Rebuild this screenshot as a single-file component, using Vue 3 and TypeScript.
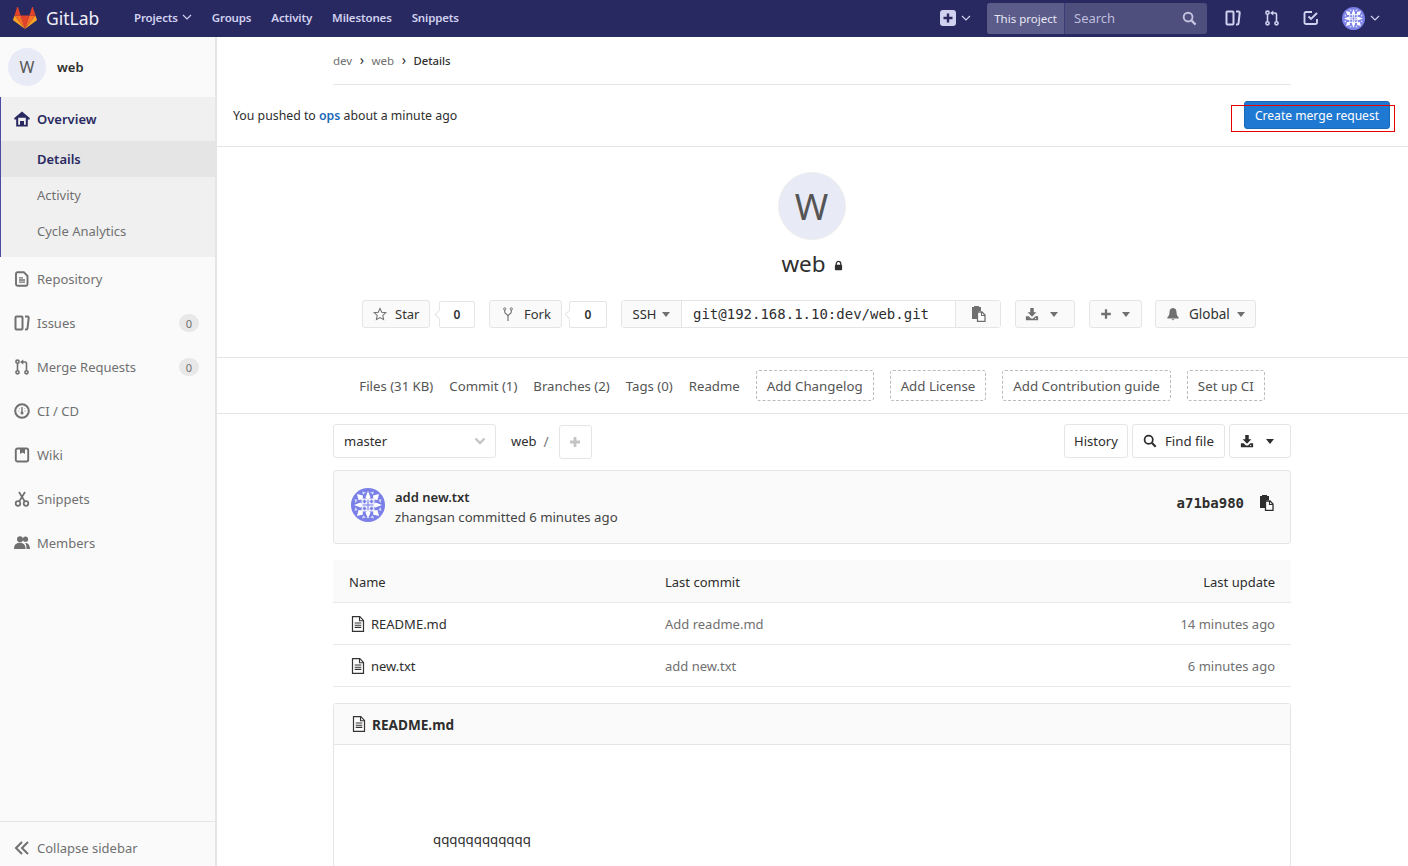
<script setup lang="ts">
const topLinks = ['Groups', 'Activity', 'Milestones', 'Snippets']
const statLinks = ['Files (31 KB)', 'Commit (1)', 'Branches (2)', 'Tags (0)', 'Readme']
const addLinks = ['Add Changelog', 'Add License', 'Add Contribution guide', 'Set up CI']
const rows = [
  { name: 'README.md', msg: 'Add readme.md', time: '14 minutes ago' },
  { name: 'new.txt', msg: 'add new.txt', time: '6 minutes ago' },
]
</script>

<template>
  <div class="page">
    <svg class="defs" width="0" height="0">
      <defs>
        <symbol id="identicon" viewBox="0 0 34 34">
          <circle cx="17" cy="17" r="17" fill="#7a80e8" />
          <g fill="#fff">
            <path d="M10.500 10.500h6v6h-6zM17.500 10.500h6v6h-6zM10.500 17.500h6v6h-6zM17.500 17.500h6v6h-6z" opacity=".85" />
            <path d="M17 3l2.500 6.500L17 12l-2.500-2.500zM17 31l2.500-6.500L17 22l-2.500 2.500zM3 17l6.500-2.500L12 17l-2.500 2.500zM31 17l-6.500-2.500L22 17l2.500 2.500z" />
            <path d="M6 6l6 1.500-.5 4-4 .5zM28 6l-6 1.500.5 4 4 .5zM6 28l6-1.500-.5-4-4-.5zM28 28l-6-1.500.5-4 4-.5z" />
            <path d="M3.500 11l3 1-2 3zM30.500 11l-3 1 2 3zM3.500 23l3-1-2-3zM30.500 23l-3-1 2-3zM11 3.500l1 3 3-2zM23 3.500l-1 3-3-2zM11 30.500l1-3 3 2zM23 30.500l-1-3-3 2z" opacity=".7" />
          </g>
          <path d="M13.500 11.500l2 2-2 2-2-2zM20.500 11.500l2 2-2 2-2-2zM13.500 18.500l2 2-2 2-2-2zM20.500 18.500l2 2-2 2-2-2z" fill="#7a80e8" />
        </symbol>
        <symbol id="doc" viewBox="0 0 14 16">
          <path d="M1.500.7h7.300l3.700 3.700v10.900h-11z" fill="#fff" stroke="#333" stroke-width="1.200" />
          <path d="M8.500.7v4h4M3.700 7h6.600M3.700 9.200h6.600M3.700 11.400h6.600" fill="none" stroke="#333" stroke-width="1.100" />
        </symbol>
        <symbol id="issues" viewBox="0 0 16 16">
          <path d="M2.500 1.500h5a1 1 0 0 1 1 1v11a1 1 0 0 1-1 1h-5a1 1 0 0 1-1-1v-11a1 1 0 0 1 1-1z" fill="none" stroke="currentColor" stroke-width="2" />
          <path d="M11 1.500h2.500a1.200 1.200 0 0 1 1.200 1.300l-1.200 10.500a1.300 1.300 0 0 1-1.300 1.200H11" fill="none" stroke="currentColor" stroke-width="2" />
        </symbol>
        <symbol id="merge" viewBox="0 0 16 16">
          <g fill="none" stroke="currentColor" stroke-width="1.600">
            <circle cx="3.500" cy="2.700" r="1.600" />
            <circle cx="3.500" cy="13.300" r="1.600" />
            <circle cx="12.500" cy="13.300" r="1.600" />
            <path d="M3.500 4.500v7M12.500 11.500V4.500a1.500 1.500 0 0 0-1.500-1.500H8.500" />
          </g>
          <path d="M9.300.4v5.200L6 3z" fill="currentColor" />
        </symbol>
        <symbol id="download" viewBox="0 0 16 16">
          <path d="M6 1h4v5h3l-5 5-5-5h3z" fill="currentColor" />
          <path d="M1 10.500h3.200L6.800 13h2.400l2.600-2.500H15V15H1z" fill="currentColor" />
          <path d="M11.500 12.700h1.300v1h-1.300z" fill="#fff" />
        </symbol>
        <symbol id="clip" viewBox="0 0 16 16">
          <path d="M2 1h2V0h5v1h2v4H8.500v8H2z" fill="currentColor" />
          <path d="M9.300 6H12l3 3v6.500H7.500V6z" fill="#fff" stroke="currentColor" stroke-width="1.300" />
          <path d="M11.500 6v3.500H15" fill="none" stroke="currentColor" stroke-width="1.100" />
        </symbol>
      </defs>
    </svg>

    <header class="topbar">
      <div class="brand">
        <svg class="tanuki" viewBox="0 0 210 194">
          <path d="M105.060 193.660l38.640-118.920H66.420z" fill="#e24329" />
          <path d="M105.060 193.660L66.420 74.730H12.270z" fill="#fc6d26" />
          <path d="M12.270 74.730L.53 110.870c-1.070 3.300.1 6.910 2.900 8.950l101.630 73.840z" fill="#fca326" />
          <path d="M12.270 74.730h54.150L43.150 3.110c-1.200-3.690-6.410-3.690-7.610 0z" fill="#e24329" />
          <path d="M105.060 193.660l38.640-118.930h54.150z" fill="#fc6d26" />
          <path d="M197.850 74.730l11.750 36.140c1.070 3.300-.1 6.910-2.910 8.950l-101.630 73.840z" fill="#fca326" />
          <path d="M197.850 74.730H143.700l23.270-71.620c1.200-3.690 6.410-3.690 7.610 0z" fill="#e24329" />
        </svg>
        <span class="brand-name">GitLab</span>
      </div>
      <nav class="toplinks">
        <span class="toplink">Projects
          <svg class="chev" viewBox="0 0 10 6"><path d="M1 1l4 4 4-4" /></svg>
        </span>
        <span v-for="l in topLinks" :key="l" class="toplink">{{ l }}</span>
      </nav>
      <div class="top-right">
        <span class="plus-box">
          <svg viewBox="0 0 16 16" width="16" height="16"><rect width="16" height="16" rx="3" fill="#d1d1f0" /><path d="M8 3.500v9M3.500 8h9" stroke="#292961" stroke-width="2.400" /></svg>
          <svg class="chev" viewBox="0 0 10 6"><path d="M1 1l4 4 4-4" /></svg>
        </span>
        <div class="search">
          <span class="scope">This project</span>
          <span class="search-text">Search</span>
          <svg class="search-icon" viewBox="0 0 16 16"><circle cx="6.500" cy="6.500" r="4.700" fill="none" stroke="#c4c4e0" stroke-width="2" /><path d="M10 10l4.500 4.500" stroke="#c4c4e0" stroke-width="2.400" /></svg>
        </div>
        <svg class="top-ico issues-ico" viewBox="0 0 16 16"><use href="#issues" /></svg>
        <svg class="top-ico merge-ico" viewBox="0 0 16 16"><use href="#merge" /></svg>
        <svg class="top-ico todo-ico" viewBox="0 0 16 16"><path d="M9 2H3a1.500 1.500 0 0 0-1.500 1.500v9A1.500 1.500 0 0 0 3 14h9.500a1.500 1.500 0 0 0 1.500-1.500V9" fill="none" stroke="currentColor" stroke-width="1.900" /><path d="M5.500 6.500L8 9l6-6" fill="none" stroke="currentColor" stroke-width="1.900" /></svg>
        <span class="user">
          <svg width="23" height="23"><use href="#identicon" width="23" height="23" /></svg>
          <svg class="chev" viewBox="0 0 10 6"><path d="M1 1l4 4 4-4" /></svg>
        </span>
      </div>
    </header>

    <div class="body">
      <aside class="sidebar">
        <div class="side-head">
          <span class="side-avatar">W</span>
          <span class="side-name">web</span>
        </div>
        <div class="side-group">
          <div class="side-item active">
            <svg class="side-ico" viewBox="0 0 16 16"><path d="M8 .5L.3 7v1.500h1.900V15.500h11.600V8.500h1.900V7zM4.200 6.800h7.600v6.900H10V10H6v3.700H4.200z" fill="currentColor" fill-rule="evenodd" /></svg>
            Overview
          </div>
          <div class="sub current">Details</div>
          <div class="sub">Activity</div>
          <div class="sub">Cycle Analytics</div>
        </div>
        <div class="side-item">
          <svg class="side-ico" viewBox="0 0 16 16"><path d="M3.500 1.200h6.300l3.700 3.800v8.300a1.500 1.500 0 0 1-1.500 1.500H3.500A1.500 1.500 0 0 1 2 13.300V2.700a1.500 1.500 0 0 1 1.500-1.500z" fill="none" stroke="currentColor" stroke-width="1.900" /><path d="M5 6.800h4M5 9h6M5 11.200h6" stroke="currentColor" stroke-width="1.300" /></svg>
          Repository
        </div>
        <div class="side-item">
          <svg class="side-ico" viewBox="0 0 16 16"><use href="#issues" /></svg>
          Issues<span class="count">0</span>
        </div>
        <div class="side-item">
          <svg class="side-ico" viewBox="0 0 16 16"><use href="#merge" /></svg>
          Merge Requests<span class="count">0</span>
        </div>
        <div class="side-item">
          <svg class="side-ico" viewBox="0 0 16 16"><circle cx="8" cy="8" r="6.800" fill="none" stroke="currentColor" stroke-width="2" /><path d="M8 4v5" stroke="currentColor" stroke-width="1.400" /><circle cx="8" cy="10" r="1.500" fill="currentColor" /><path d="M4.500 8h.8M10.700 8h.8M5 5.200l.5.500M11 5.200l-.5.500" stroke="currentColor" stroke-width="1" /></svg>
          CI / CD
        </div>
        <div class="side-item">
          <svg class="side-ico" viewBox="0 0 16 16"><rect x="1.800" y="1.500" width="12.400" height="13" rx="1.800" fill="none" stroke="currentColor" stroke-width="1.900" /><path d="M6 1.500h5V7L8.500 5.500 6 7z" fill="currentColor" /></svg>
          Wiki
        </div>
        <div class="side-item">
          <svg class="side-ico" viewBox="0 0 16 16"><circle cx="4" cy="12.500" r="2.300" fill="none" stroke="currentColor" stroke-width="1.700" /><circle cx="12" cy="12.500" r="2.300" fill="none" stroke="currentColor" stroke-width="1.700" /><path d="M5.200 10.500L11 1M10.800 10.500L5 1" stroke="currentColor" stroke-width="1.700" /></svg>
          Snippets
        </div>
        <div class="side-item">
          <svg class="side-ico" viewBox="0 0 16 16"><circle cx="6" cy="4.200" r="3" fill="currentColor" /><circle cx="11.500" cy="4.200" r="2.600" fill="currentColor" /><path d="M0 14c0-4 2-6.200 5.800-6.200S11.500 10 11.500 14z" fill="currentColor" /><path d="M12.500 14H16c0-3.300-1.500-6-4.800-6 1 1.500 1.300 3.500 1.300 6z" fill="currentColor" /></svg>
          Members
        </div>
        <div class="collapse">
          <svg class="side-ico" viewBox="0 0 16 16"><path d="M8 2L2 8l6 6M14 2L8 8l6 6" fill="none" stroke="currentColor" stroke-width="2" /></svg>
          Collapse sidebar
        </div>
      </aside>

      <main class="main">
        <div class="crumbs">
          <span class="crumb">dev</span><span class="sep">›</span>
          <span class="crumb">web</span><span class="sep">›</span>
          <span class="crumb-last">Details</span>
        </div>

        <div class="pushed">
          <span>You pushed to <b class="ops">ops</b> about a minute ago</span>
          <button class="btn-create">Create merge request</button>
          <span class="red-mark"></span>
        </div>

        <section class="project">
          <div class="big-avatar">W</div>
          <div class="title">web
            <svg class="lock" viewBox="0 0 10 11"><path d="M2.500 5V3.500a2.500 2.500 0 0 1 5 0V5" fill="none" stroke="#2e2e2e" stroke-width="1.400" /><rect x="1" y="4.800" width="8" height="6" rx="1" fill="#2e2e2e" /></svg>
          </div>
          <div class="actions">
            <span class="btn star"><svg class="ico14" viewBox="0 0 16 16"><path d="M8 1.600l2 4.300 4.700.6-3.500 3.200.9 4.700L8 12.100l-4.100 2.300.9-4.700L1.300 6.500 6 5.900z" fill="none" stroke="#707070" stroke-width="1.200" /></svg>Star</span>
            <span class="bubble b1">0</span>
            <span class="btn fork"><svg class="fork-ico" viewBox="0 0 10 16"><circle cx="1.500" cy="2" r="1.200" fill="none" stroke="#707070" /><circle cx="8.500" cy="2" r="1.200" fill="none" stroke="#707070" /><path d="M1.500 3.200v2c0 2 3.500 2.500 3.500 4.800v5M8.500 3.200v2c0 2-3.500 2.500-3.500 4.800" fill="none" stroke="#707070" stroke-width="1.200" /></svg>Fork</span>
            <span class="bubble b2">0</span>
            <div class="clone">
              <span class="ssh">SSH<i class="caret"></i></span>
              <span class="url">git@192.168.1.10:dev/web.git</span>
              <span class="copy"><svg class="ico16 grey" viewBox="0 0 16 16"><use href="#clip" /></svg></span>
            </div>
            <span class="btn dl"><svg class="ico14 grey" viewBox="0 0 16 16"><use href="#download" /></svg><i class="caret"></i></span>
            <span class="btn add"><svg class="ico14" viewBox="0 0 16 16"><path d="M8 2.500v11M2.500 8h11" stroke="#707070" stroke-width="2.600" /></svg><i class="caret"></i></span>
            <span class="btn global"><svg class="ico14" viewBox="0 0 16 16"><path d="M8 1c-3 0-4 2.500-4 5 0 3-1 4.500-2.500 6v1h13v-1C13 10.500 12 9 12 6c0-2.500-1-5-4-5zM6.300 14a1.800 1.800 0 0 0 3.400 0z" fill="#707070" /></svg>Global<i class="caret"></i></span>
          </div>
        </section>

        <div class="stats">
          <span v-for="s in statLinks" :key="s" class="stat">{{ s }}</span>
          <span v-for="a in addLinks" :key="a" class="dashed">{{ a }}</span>
        </div>

        <div class="content">
          <div class="tree-bar">
            <div class="branch">master
              <svg class="branch-chev" viewBox="0 0 12 8"><path d="M1.500 1.500L6 6l4.500-4.500" fill="none" stroke="#c4c4c4" stroke-width="2.400" /></svg>
            </div>
            <span class="path">web</span><span class="slash">/</span>
            <span class="plus"><svg viewBox="0 0 12 12" width="12" height="12"><path d="M6 1v10M1 6h10" stroke="#c4c4c4" stroke-width="2.800" /></svg></span>
            <div class="tree-right">
              <span class="tbtn history">History</span>
              <span class="tbtn find"><svg viewBox="0 0 16 16" width="14" height="14"><circle cx="6.500" cy="6.500" r="4.700" fill="none" stroke="#2e2e2e" stroke-width="2" /><path d="M10 10l4.500 4.500" stroke="#2e2e2e" stroke-width="2.400" /></svg>Find file</span>
              <span class="tbtn dl2"><svg class="ico14 dark" viewBox="0 0 16 16"><use href="#download" /></svg><i class="caret dark-caret"></i></span>
            </div>
          </div>

          <div class="commit">
            <svg class="commit-avatar" width="34" height="34"><use href="#identicon" width="34" height="34" /></svg>
            <div class="commit-text">
              <div class="commit-title">add new.txt</div>
              <div class="commit-meta">zhangsan committed 6 minutes ago</div>
            </div>
            <span class="sha">a71ba980</span>
            <svg class="ico16 dark sha-copy" viewBox="0 0 16 16"><use href="#clip" /></svg>
          </div>

          <div class="table">
            <div class="tr th">
              <span class="c1">Name</span><span class="c2">Last commit</span><span class="c3">Last update</span>
            </div>
            <div v-for="r in rows" :key="r.name" class="tr">
              <span class="c1 fname"><svg width="14" height="16"><use href="#doc" width="14" height="16" /></svg>{{ r.name }}</span>
              <span class="c2 muted">{{ r.msg }}</span>
              <span class="c3 muted">{{ r.time }}</span>
            </div>
          </div>

          <div class="readme">
            <div class="readme-head"><svg width="14" height="16"><use href="#doc" width="14" height="16" /></svg>README.md</div>
            <div class="readme-body">qqqqqqqqqqqq</div>
          </div>
        </div>
      </main>
    </div>
  </div>
</template>

<style>
html, body { margin: 0; height: 100%; overflow: hidden; background: #fff; }
</style>

<style scoped>
.page { height: 866px; overflow: hidden; display: flex; flex-direction: column; font-family: "Noto Sans", "Open Sans", sans-serif; font-size: 14px; color: #2e2e2e; }
.defs { position: absolute; }
.topbar { height: 37px; flex: none; background: #292961; display: flex; align-items: center; color: #d1d1f0; padding-bottom: 1px; box-sizing: border-box; }
.brand { display: flex; align-items: center; margin-left: 13px; width: 121px; flex: none; }
.tanuki { width: 24px; height: 22px; }
.brand-name { margin-left: 9px; font-size: 17.500px; color: #f0f0f8; }
.toplinks { display: flex; gap: 20px; font-size: 11.500px; font-weight: 600; letter-spacing: -0.15px; padding-bottom: 2px; }
.toplink { display: flex; align-items: center; gap: 4px; }
.chev { width: 10px; height: 6px; fill: none; stroke: #d1d1f0; stroke-width: 1.200; }
.top-right { margin-left: auto; display: flex; align-items: center; }
.plus-box { display: flex; align-items: center; gap: 5px; margin-right: 16px; }
.search { width: 220px; height: 31px; background: #4f4f7e; border-radius: 3px; display: flex; align-items: center; overflow: hidden; }
.scope { width: 77px; height: 100%; background: #5c5c8a; border-right: 1px solid #3b3b78; display: flex; align-items: center; justify-content: center; font-size: 11.500px; color: #e8e8f5; flex: none; }
.search-text { margin-left: 9px; font-size: 13px; color: #bdbddb; }
.search-icon { width: 15px; height: 15px; margin-left: auto; margin-right: 10px; }
.top-ico { width: 16px; height: 16px; color: #d1d1f0; }
.issues-ico { margin-left: 18px; }
.merge-ico { margin-left: 23px; }
.todo-ico { margin-left: 23px; }
.user { display: flex; align-items: center; gap: 5px; margin-left: 23px; margin-right: 28px; }

.body { flex: 1; display: flex; min-height: 0; }
.sidebar { width: 217px; flex: none; box-sizing: border-box; background: #fafafa; border-right: 2px solid #e5e5e5; display: flex; flex-direction: column; color: #707070; font-size: 13px; }
.side-head { height: 60px; display: flex; align-items: center; flex: none; }
.side-avatar { width: 38px; height: 38px; margin-left: 8px; border-radius: 50%; background: #e8eaf6; color: #555; display: flex; align-items: center; justify-content: center; font-size: 16px; }
.side-name { margin-left: 11px; color: #2e2e2e; font-weight: 600; font-size: 13px; }
.side-group { background: #f0f0f0; border-left: 1px solid #4b4ba3; padding-bottom: 8px; }
.side-item { height: 44px; flex: none; display: flex; align-items: center; padding-left: 14px; padding-right: 16px; }
.side-group .side-item { padding-left: 13px; }
.side-item.active { color: #292961; font-weight: 600; }
.side-ico { width: 16px; height: 16px; margin-right: 7px; flex: none; }
.sub { height: 36px; display: flex; align-items: center; padding-left: 36px; }
.sub.current { background: #e5e5e5; color: #292961; font-weight: 600; }
.count { margin-left: auto; width: 20px; height: 18px; border-radius: 9px; background: #e8e8e8; font-size: 11px; display: flex; align-items: center; justify-content: center; }
.collapse { margin-top: auto; height: 45px; flex: none; border-top: 1px solid #e5e5e5; display: flex; align-items: center; padding-left: 14px; padding-top: 7px; box-sizing: border-box; }

.main { flex: 1; min-width: 0; display: flex; flex-direction: column; }
.crumbs { margin: 0 116px; width: 958px; height: 47px; flex: none; border-bottom: 1px solid #e5e5e5; display: flex; align-items: center; font-size: 11.500px; color: #707070; }
.sep { margin: 0 7.500px; color: #2e2e2e; font-size: 14px; line-height: 14px; position: relative; top: -1px; }
.crumb-last { color: #2e2e2e; font-weight: 500; font-size: 11.300px; }
.pushed { height: 61px; flex: none; display: flex; align-items: center; justify-content: space-between; padding: 0 18px 0 16px; border-bottom: 1px solid #e5e5e5; position: relative; font-size: 12.300px; }
.ops { color: #1b69b6; font-weight: 600; }
.btn-create { height: 28px; width: 146px; margin-top: -1px; background: #1f78d1; border: 1px solid #1b69b6; border-radius: 3px; color: #fff; font: inherit; font-size: 12.100px; padding: 0; }
.red-mark { position: absolute; left: 1014px; top: 20px; width: 162px; height: 25px; border: 1px solid #e60000; pointer-events: none; }
.project { height: 210px; flex: none; border-bottom: 1px solid #e5e5e5; display: flex; flex-direction: column; align-items: center; }
.big-avatar { width: 68px; height: 68px; box-sizing: border-box; margin-top: 25px; margin-left: -2px; border-radius: 50%; background: #e8eaf6; border: 1px solid #eee; font-size: 36px; color: #555; display: flex; align-items: center; justify-content: center; }
.title { font-size: 22.500px; line-height: 30px; margin-top: 9px; color: #2e2e2e; display: flex; align-items: center; margin-left: -1px; }
.lock { width: 9px; height: 11px; margin-left: 8px; margin-top: 2px; }
.actions { display: flex; align-items: center; margin-top: 21px; height: 28px; margin-left: -7px; }
.btn { height: 28px; box-sizing: border-box; border: 1px solid #e5e5e5; border-radius: 3px; background: #fafafa; display: flex; align-items: center; color: #333; font-size: 13px; padding: 0 10px; flex: none; }
.star { width: 68px; }
.fork { width: 73px; padding-left: 13px; }
.fork-ico { width: 10px; height: 15px; margin-right: 11px; flex: none; }
.ico14 { width: 14px; height: 14px; margin-right: 8px; flex: none; }
.ico16 { width: 16px; height: 16px; flex: none; }
.grey { color: #707070; }
.dark { color: #2e2e2e; }
.caret { display: inline-block; width: 0; height: 0; border-left: 4.500px solid transparent; border-right: 4.500px solid transparent; border-top: 5px solid #707070; margin-left: 6px; flex: none; }
.bubble { height: 27px; margin-top: 1px; border: 1px solid #e5e5e5; border-radius: 2px; box-sizing: border-box; display: flex; align-items: center; justify-content: center; font-size: 12px; font-weight: 600; color: #333; position: relative; background: #fff; flex: none; }
.b1 { width: 36px; margin-left: 9px; margin-right: 14px; }
.b2 { width: 38px; margin-left: 7px; margin-right: 14px; }
.bubble::before { content: ""; position: absolute; left: -4px; top: 9px; width: 6px; height: 6px; transform: rotate(45deg); background: #fff; border-left: 1px solid #e5e5e5; border-bottom: 1px solid #e5e5e5; }
.clone { display: flex; height: 28px; width: 380px; box-sizing: border-box; border: 1px solid #e5e5e5; border-radius: 3px; flex: none; }
.ssh { width: 59px; flex: none; background: #fafafa; border-right: 1px solid #e5e5e5; display: flex; align-items: center; justify-content: center; font-size: 13px; }
.url { flex: 1; font-family: "DejaVu Sans Mono", monospace; font-size: 14px; display: flex; align-items: center; padding-left: 11px; }
.copy { width: 44px; flex: none; background: #fafafa; border-left: 1px solid #e5e5e5; display: flex; align-items: center; justify-content: center; }
.dl { margin-left: 14px; width: 60px; padding-left: 9px; }
.dl .ico14 { margin-right: 5px; }
.add { margin-left: 14px; width: 53px; padding-left: 9px; }
.add .ico14 { margin-right: 3px; }
.global { margin-left: 13px; width: 101px; font-size: 13.500px; }
.global .ico14 { margin-right: 9px; }
.global .caret { margin-left: 7px; }
.stats { height: 55px; flex: none; border-bottom: 1px solid #e5e5e5; display: flex; align-items: center; justify-content: center; gap: 16px; font-size: 13.200px; color: #555; padding-right: 1px; }
.dashed { height: 31px; padding: 0 10px; border: 1px dashed #bbb; border-radius: 3px; display: flex; align-items: center; box-sizing: border-box; font-size: 13.300px; }
.content { margin-left: 116px; width: 958px; flex: none; }
.tree-bar { height: 34px; margin-top: 10px; display: flex; align-items: center; }
.branch { width: 163px; height: 34px; box-sizing: border-box; border: 1px solid #e5e5e5; border-radius: 3px; display: flex; align-items: center; justify-content: space-between; padding: 0 9px 0 10px; font-size: 13px; }
.branch-chev { width: 12px; height: 8px; }
.path { margin-left: 15px; font-size: 13px; }
.slash { margin-left: 7px; color: #777; }
.plus { margin-left: 10px; width: 33px; height: 34px; box-sizing: border-box; margin-top: 2px; border: 1px solid #e5e5e5; border-radius: 3px; display: flex; align-items: center; justify-content: center; }
.tree-right { margin-left: auto; display: flex; gap: 4px; }
.tbtn { height: 34px; box-sizing: border-box; border: 1px solid #e5e5e5; border-radius: 3px; padding: 0 10px; display: flex; align-items: center; font-size: 13px; }
.history { padding: 0 9px; }
.find { font-size: 13.300px; }
.find svg { margin-right: 8px; }
.dl2 { width: 62px; }
.dl2 .ico14 { margin-right: 12px; }
.dark-caret { border-top-color: #2e2e2e; margin-left: 0; }
.commit { height: 74px; margin-top: 12px; box-sizing: border-box; background: #fafafa; border: 1px solid #e5e5e5; border-radius: 3px; display: flex; align-items: center; padding-left: 17px; }
.commit-avatar { flex: none; margin-bottom: 4px; }
.commit-text { margin-left: 10px; line-height: 20px; font-size: 13.200px; }
.commit-title { font-weight: 600; font-size: 13px; }
.commit-meta { color: #444; }
.sha { margin-left: auto; margin-bottom: 8px; font-family: "DejaVu Sans Mono", monospace; font-weight: 700; font-size: 14px; }
.sha-copy { margin-left: 14px; margin-right: 16px; margin-bottom: 8px; }
.table { margin-top: 16px; font-size: 13px; }
.tr { height: 42px; box-sizing: border-box; border-bottom: 1px solid #e9e9e9; display: flex; align-items: center; padding: 0 16px; }
.th { background: #fafafa; height: 43px; padding-top: 1px; }
.c1 { width: 316px; flex: none; display: flex; align-items: center; }
.c2 { flex: 1; }
.c3 { flex: none; }
.fname svg { margin-right: 6px; margin-left: 2px; }
.muted { color: #707070; }
.readme { margin-top: 16px; border: 1px solid #e5e5e5; border-radius: 3px 3px 0 0; height: 300px; }
.readme-head { height: 41px; box-sizing: border-box; background: #fafafa; border-bottom: 1px solid #e5e5e5; display: flex; align-items: center; padding-left: 18px; font-weight: 700; font-size: 13.600px; }
.readme-head svg { margin-right: 6px; }
.readme-body { padding: 85px 0 0 99px; font-size: 13.250px; }
</style>
